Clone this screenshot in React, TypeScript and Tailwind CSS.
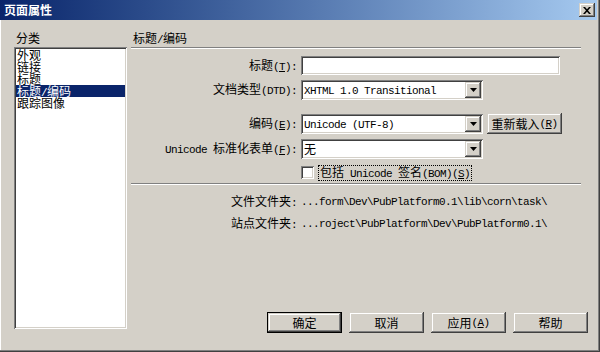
import type { ReactNode } from 'react'

const raised =
  'shadow-[inset_-1px_-1px_#404040,inset_1px_1px_#d4d0c8,inset_-2px_-2px_#808080,inset_2px_2px_#ffffff]'
const sunken =
  'shadow-[inset_1px_1px_#808080,inset_-1px_-1px_#ffffff,inset_2px_2px_#404040,inset_-2px_-2px_#d4d0c8]'

// half-width latin text, SimSun style
function M({ children }: { children: ReactNode }) {
  return <span className="font-['Liberation_Mono',monospace] text-[11px] tracking-[-0.6px]">{children}</span>
}

function Arrow() {
  return (
    <svg width="7" height="4" viewBox="0 0 7 4">
      <polygon points="0,0 7,0 3.5,4" fill="#000" />
    </svg>
  )
}

function Combo({ children }: { children: ReactNode }) {
  return (
    <div className={`flex h-[20px] w-[182px] items-center bg-white p-[2px] ${sunken}`}>
      <div className="flex-1 pl-[1px] leading-[16px]">{children}</div>
      <div className={`flex h-[16px] w-[16px] items-center justify-center bg-[#d4d0c8] ${raised}`}>
        <Arrow />
      </div>
    </div>
  )
}

function Row({ label, children, className }: { label: ReactNode; children: ReactNode; className: string }) {
  return (
    <div className={`flex items-center ${className}`}>
      <div className="w-[170px] pr-[4px] text-right leading-[12px]">{label}</div>
      {children}
    </div>
  )
}

function Button({ children, primary }: { children: ReactNode; primary?: boolean }) {
  return (
    <div
      className={`flex h-[21px] w-[75px] items-center justify-center bg-[#d4d0c8] leading-[12px] ${raised} ${
        primary ? 'border border-black' : ''
      }`}
    >
      {children}
    </div>
  )
}

const categories = ['外观', '链接', '标题', '标题/编码', '跟踪图像']

export default function App() {
  return (
    <div className="flex h-[352px] w-[600px] flex-col overflow-hidden bg-[#d4d0c8] font-['Noto_Sans_CJK_SC',sans-serif] text-[12px] text-black shadow-[inset_-1px_-1px_#404040,inset_-2px_-2px_#808080,inset_1px_0_#ffffff]">
      {/* Title bar */}
      <div className="mr-[3px] flex h-[20px] items-center justify-between bg-linear-to-r from-[#0a246a] to-[#a6caf0] pl-[4px] pr-[2px]">
        <span className="text-[12px] font-bold leading-[14px] text-white">页面属性</span>
        <div className={`flex h-[14px] w-[16px] items-center justify-center bg-[#d4d0c8] ${raised}`}>
          <svg width="8" height="7" viewBox="0 0 8 7">
            <path d="M0 0h2l2 2.2 2-2.2h2L5 3.5 8 7H6L4 4.8 2 7H0l3-3.5z" fill="#000" />
          </svg>
        </div>
      </div>

      <div className="flex flex-1">
        {/* Category list */}
        <div className="flex flex-col pl-[14px] pt-[12px]">
          <div className="h-[12px] pl-[2px] leading-[12px]">分类</div>
          <div className={`mt-[3px] h-[282px] w-[113px] bg-white p-[2px] ${sunken}`}>
            {categories.map((c, i) => (
              <div
                key={c}
                className={`h-[12px] pl-[1px] leading-[12px] ${i === 3 ? 'bg-[#0a246a] text-white' : ''}`}
              >
                {c === '标题/编码' ? (
                  <>
                    标题<M>/</M>编码
                  </>
                ) : (
                  c
                )}
              </div>
            ))}
          </div>
        </div>

        {/* Settings panel */}
        <div className="ml-[4px] flex flex-1 flex-col pb-[19px] pr-[12px] pt-[12px]">
          <div className="h-[12px] pl-[2px] leading-[12px]">
            标题<M>/</M>编码
          </div>
          <div className="mt-[3px] h-[2px] w-[450px] border-b border-t border-b-white border-t-[#808080]" />

          <Row className="mt-[7px] h-[19px]" label={<>标题<M>(<u>T</u>):</M></>}>
            <div className={`h-[19px] w-[259px] bg-white ${sunken}`} />
          </Row>

          <Row className="mt-[5px] h-[20px]" label={<>文档类型<M>(DTD):</M></>}>
            <Combo>
              <M>XHTML 1.0 Transitional</M>
            </Combo>
          </Row>

          <Row className="mt-[13px] h-[21px]" label={<>编码<M>(<u>E</u>):</M></>}>
            <Combo>
              <M>Unicode (UTF-8)</M>
            </Combo>
            <div className="ml-[4px]">
              <Button>
                重新载入<M>(<u>R</u>)</M>
              </Button>
            </div>
          </Row>

          <Row
            className="mt-[5px] h-[20px]"
            label={
              <>
                <M>Unicode </M>标准化表单<M>(<u>F</u>):</M>
              </>
            }
          >
            <Combo>无</Combo>
          </Row>

          <div className="mt-[6px] flex h-[15px] items-center pl-[170px]">
            <div className={`h-[13px] w-[13px] bg-white ${sunken}`} />
            <span className="ml-[4px] border border-dotted border-black px-[1px] leading-[12px]">
              包括<M> Unicode </M>签名<M>(BOM)(<u>S</u>)</M>
            </span>
          </div>

          <div className="mt-[3px] h-[2px] w-[450px] border-b border-t border-b-white border-t-[#808080]" />

          <div className="mt-[11px] flex h-[12px] items-center">
            <div className="w-[170px] pr-[4px] text-right leading-[12px]">
              文件文件夹<M>:</M>
            </div>
            <M>...form\Dev\PubPlatform0.1\lib\corn\task\</M>
          </div>
          <div className="mt-[10px] flex h-[12px] items-center">
            <div className="w-[170px] pr-[4px] text-right leading-[12px]">
              站点文件夹<M>:</M>
            </div>
            <M>...roject\PubPlatform\Dev\PubPlatform0.1\</M>
          </div>

          <div className="mt-auto flex justify-end gap-[7px]">
            <Button primary>确定</Button>
            <Button>取消</Button>
            <Button>
              应用<M>(<u>A</u>)</M>
            </Button>
            <Button>帮助</Button>
          </div>
        </div>
      </div>
    </div>
  )
}
